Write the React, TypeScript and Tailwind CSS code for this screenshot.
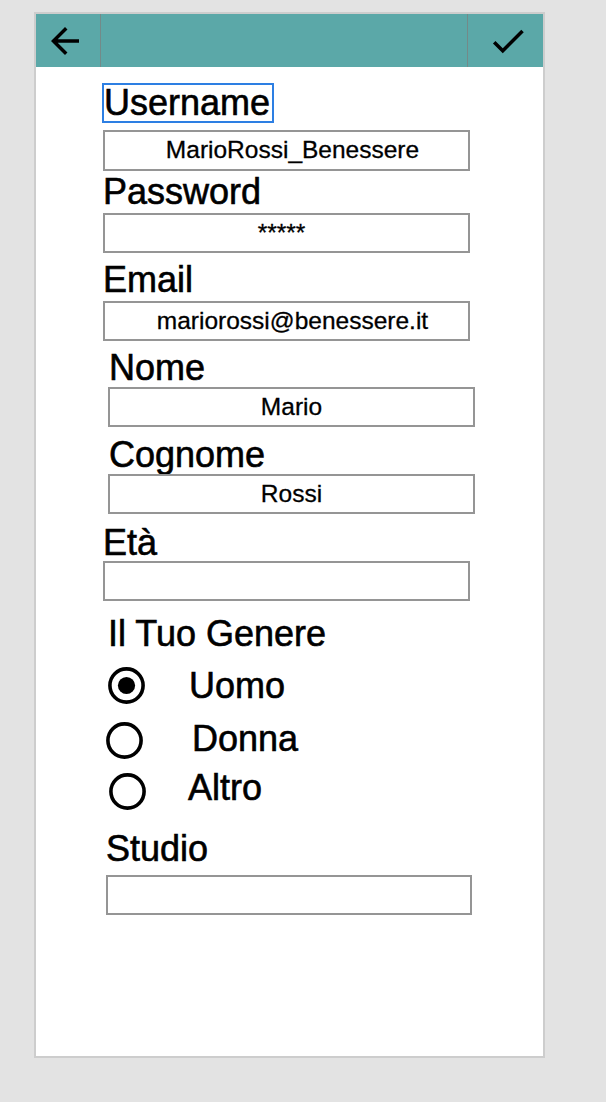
import React from "react";

function BackIcon() {
  return (
    <svg width="42" height="42" viewBox="0 0 24 24" fill="black">
      <path d="M20 11H7.83l5.59-5.59L12 4l-8 8 8 8 1.41-1.41L7.83 13H20v-2z" />
    </svg>
  );
}

function CheckIcon() {
  return (
    <svg width="42" height="42" viewBox="0 0 24 24" fill="black">
      <path d="M9 16.17L4.83 12l-1.42 1.41L9 19 21 7l-1.41-1.41z" />
    </svg>
  );
}

function Label({ text, className }: { text: string; className: string }) {
  return (
    <div
      className={
        "h-[36px] w-fit whitespace-nowrap text-[36px] leading-[36px] text-black [-webkit-text-stroke:0.6px_black] " +
        className
      }
    >
      {text}
    </div>
  );
}

function Box({ value, className }: { value?: string; className: string }) {
  return (
    <div
      className={
        "flex h-[40px] items-center justify-center border-2 border-[#959595] text-[24.5px] leading-none text-black [-webkit-text-stroke:0.3px_black] " +
        className
      }
    >
      {value}
    </div>
  );
}

function Radio({ checked }: { checked?: boolean }) {
  return (
    <svg width="37" height="37" viewBox="0 0 37 37">
      <circle cx="18.5" cy="18.5" r="16.6" fill="none" stroke="black" strokeWidth="3.6" />
      {checked && <circle cx="18.5" cy="18.5" r="8.6" fill="black" />}
    </svg>
  );
}

export default function App() {
  return (
    <div className="min-h-screen bg-[#e3e3e3] pl-[34px] pt-[12px] font-['Liberation_Sans',Arial,sans-serif]">
      <div className="flex h-[1046px] w-[511px] flex-col border-2 border-[#cdcdcd] bg-white">
        <div className="flex h-[53px] shrink-0 bg-[#5ba8a8]">
          <div className="flex w-[64px] items-center pl-[8px]">
            <BackIcon />
          </div>
          <div className="w-px bg-[#738a89]" />
          <div className="flex-1" />
          <div className="w-px bg-[#738a89]" />
          <div className="flex w-[75px] items-center pl-[19px]">
            <CheckIcon />
          </div>
        </div>

        <div className="flex flex-col">
          <div className="ml-[66px] mt-[16px] w-fit border-2 border-[#2d7fe3] pr-[2px]">
            <Label text="Username" className="" />
          </div>
          <Box value="MarioRossi_Benessere" className="ml-[67px] mt-[7px] h-[41px] w-[367px] pl-[12px]" />

          <Label text="Password" className="ml-[67px] mt-[3px]" />
          <Box value="*****" className="ml-[67px] mt-[3px] w-[367px] pr-[10px]" />

          <Label text="Email" className="ml-[67px] mt-[9px]" />
          <Box value="mariorossi@benessere.it" className="ml-[67px] mt-[3px] w-[367px] pl-[12px]" />

          <Label text="Nome" className="ml-[73px] mt-[9px]" />
          <Box value="Mario" className="ml-[72px] mt-[1px] w-[367px]" />

          <Label text="Cognome" className="ml-[73px] mt-[10px]" />
          <Box value="Rossi" className="ml-[72px] mt-[1px] w-[367px]" />

          <Label text="Età" className="ml-[67px] mt-[11px]" />
          <Box className="ml-[67px] w-[367px]" />

          <Label text="Il Tuo Genere" className="ml-[72px] mt-[15px]" />

          <div className="ml-[72px] mt-[15px] flex h-[37px] items-center">
            <Radio checked />
            <span className="ml-[44px] text-[36px] leading-[36px] text-black [-webkit-text-stroke:0.6px_black]">Uomo</span>
          </div>
          <div className="ml-[70px] mt-[18px] flex h-[37px] items-center">
            <Radio />
            <span className="ml-[49px] -mt-[4px] text-[36px] leading-[36px] text-black [-webkit-text-stroke:0.6px_black]">Donna</span>
          </div>
          <div className="ml-[73px] mt-[14px] flex h-[37px] items-center">
            <Radio />
            <span className="ml-[42px] -mt-[8px] text-[36px] leading-[36px] text-black [-webkit-text-stroke:0.6px_black]">Altro</span>
          </div>

          <Label text="Studio" className="ml-[70px] mt-[21px]" />
          <Box className="ml-[70px] mt-[8px] w-[366px]" />
        </div>
      </div>
    </div>
  );
}
